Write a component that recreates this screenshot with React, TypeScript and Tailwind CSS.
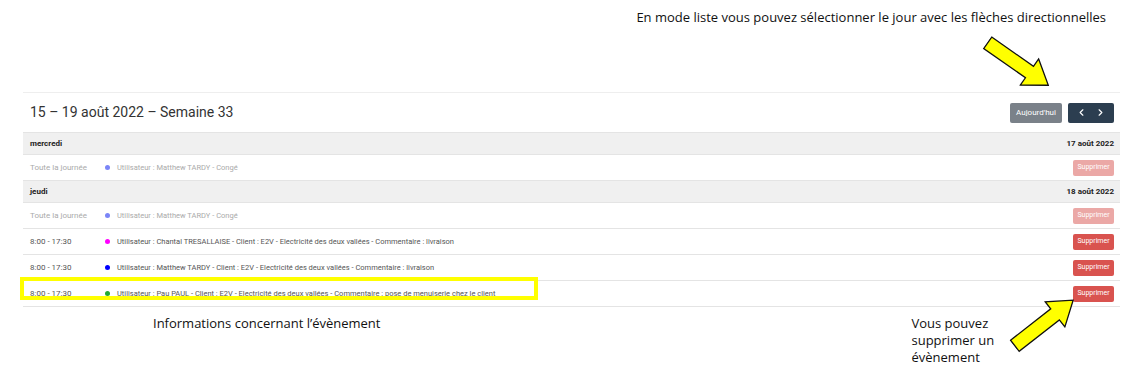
import { ChevronLeft, ChevronRight } from 'lucide-react';

type Row = {
  time: string;
  color: string;
  text: string;
  allDay?: boolean;
  highlight?: boolean;
};

type Day = { name: string; date: string; rows: Row[] };

const days: Day[] = [
  {
    name: 'mercredi',
    date: '17 août 2022',
    rows: [{ time: 'Toute la journée', color: 'bg-[#7b85f7]', text: 'Utilisateur : Matthew TARDY - Congé', allDay: true }],
  },
  {
    name: 'jeudi',
    date: '18 août 2022',
    rows: [
      { time: 'Toute la journée', color: 'bg-[#7b85f7]', text: 'Utilisateur : Matthew TARDY - Congé', allDay: true },
      {
        time: '8:00 - 17:30',
        color: 'bg-[#ff00ff]',
        text: 'Utilisateur : Chantal TRESALLAISE - Client : E2V - Electricité des deux vallées - Commentaire : livraison',
      },
      {
        time: '8:00 - 17:30',
        color: 'bg-[#0000ff]',
        text: 'Utilisateur : Matthew TARDY - Client : E2V - Electricité des deux vallées - Commentaire : livraison',
      },
      {
        time: '8:00 - 17:30',
        color: 'bg-[#22aa33]',
        text: 'Utilisateur : Pau PAUL - Client : E2V - Electricité des deux vallées - Commentaire : pose de menuiserie chez le client',
        highlight: true,
      },
    ],
  },
];

function Arrow({ className }: { className: string }) {
  // yellow block arrow, pointing to the right, rotated by the parent
  return (
    <svg className={className} width="76" height="34" viewBox="0 0 76 34">
      <polygon
        points="1,10 52,10 52,1 75,17 52,33 52,24 1,24"
        fill="#ffff00"
        stroke="#111"
        strokeWidth="1.3"
        strokeLinejoin="miter"
      />
    </svg>
  );
}

function EventRow({ row }: { row: Row }) {
  const tone = row.allDay ? 'text-[#aaa]' : 'text-[#555]';
  return (
    <div className="flex h-[26px] items-center border-t border-[#e4e4e4] pl-[7px] pr-[6px]">
      <div className="relative flex items-center">
        {row.highlight && (
          <div className="absolute -left-[10px] -top-[11px] h-[23px] w-[518px] border-[4px] border-[#ffff00]" />
        )}
        <span className={`w-[75px] ${tone}`}>{row.time}</span>
        <span className={`mr-[7px] h-[5px] w-[5px] rounded-full ${row.color}`} />
        <span className={`text-[7.5px] ${tone}`}>{row.text}</span>
      </div>
      <button
        className={`ml-auto h-[16px] w-[41px] rounded-[2px] bg-[#d9534f] text-[7px] text-white ${row.allDay ? 'opacity-50' : ''}`}
      >
        Supprimer
      </button>
    </div>
  );
}

export default function App() {
  return (
    <div className="relative h-[392px] w-[1144px] overflow-hidden bg-white font-['Roboto',sans-serif]">
      {/* annotation top */}
      <div className="flex h-[92px] justify-end pr-[38px] pt-[8px]">
        <p className="font-['Open_Sans',sans-serif] text-[13px] text-[#111]">
          En mode liste vous pouvez sélectionner le jour avec les flèches directionnelles
        </p>
      </div>

      {/* calendar */}
      <div className="mx-[23px] w-[1097px] border-t border-[#eee]">
        <div className="flex h-[39px] items-center pl-[7px] pr-[6px]">
          <h2 className="text-[14px] text-[#333]">15 – 19 août 2022 – Semaine 33</h2>
          <div className="ml-auto flex gap-[6px]">
            <button className="h-[20px] w-[52px] rounded-[2px] bg-[#7a8189] text-[8px] text-white">Aujourd'hui</button>
            <div className="flex h-[20px] w-[46px] items-center justify-around rounded-[2px] bg-[#2c3e50] px-[4px] text-white">
              <ChevronLeft size={11} strokeWidth={2.5} />
              <ChevronRight size={11} strokeWidth={2.5} />
            </div>
          </div>
        </div>

        <div className="text-[8px]">
          {days.map((day) => (
            <div key={day.name}>
              <div className="flex h-[22px] items-center border-t border-[#e4e4e4] bg-[#f0f0f0] pl-[7px] pr-[6px] font-bold text-[#222]">
                <span>{day.name}</span>
                <span className="ml-auto">{day.date}</span>
              </div>
              {day.rows.map((row, i) => (
                <EventRow key={i} row={row} />
              ))}
            </div>
          ))}
          <div className="border-t border-[#e4e4e4]" />
        </div>
      </div>

      {/* bottom annotations */}
      <div className="flex pt-[8px] font-['Open_Sans',sans-serif] text-[13px] leading-[17px] text-[#111]">
        <p className="ml-[153px]">Informations concernant l’évènement</p>
        <p className="ml-[531px] w-[100px]">Vous pouvez supprimer un évènement</p>
      </div>

      <Arrow className="absolute left-[980px] top-[47px] rotate-[35deg]" />
      <Arrow className="absolute left-[1006px] top-[306px] -rotate-[38deg]" />
    </div>
  );
}
